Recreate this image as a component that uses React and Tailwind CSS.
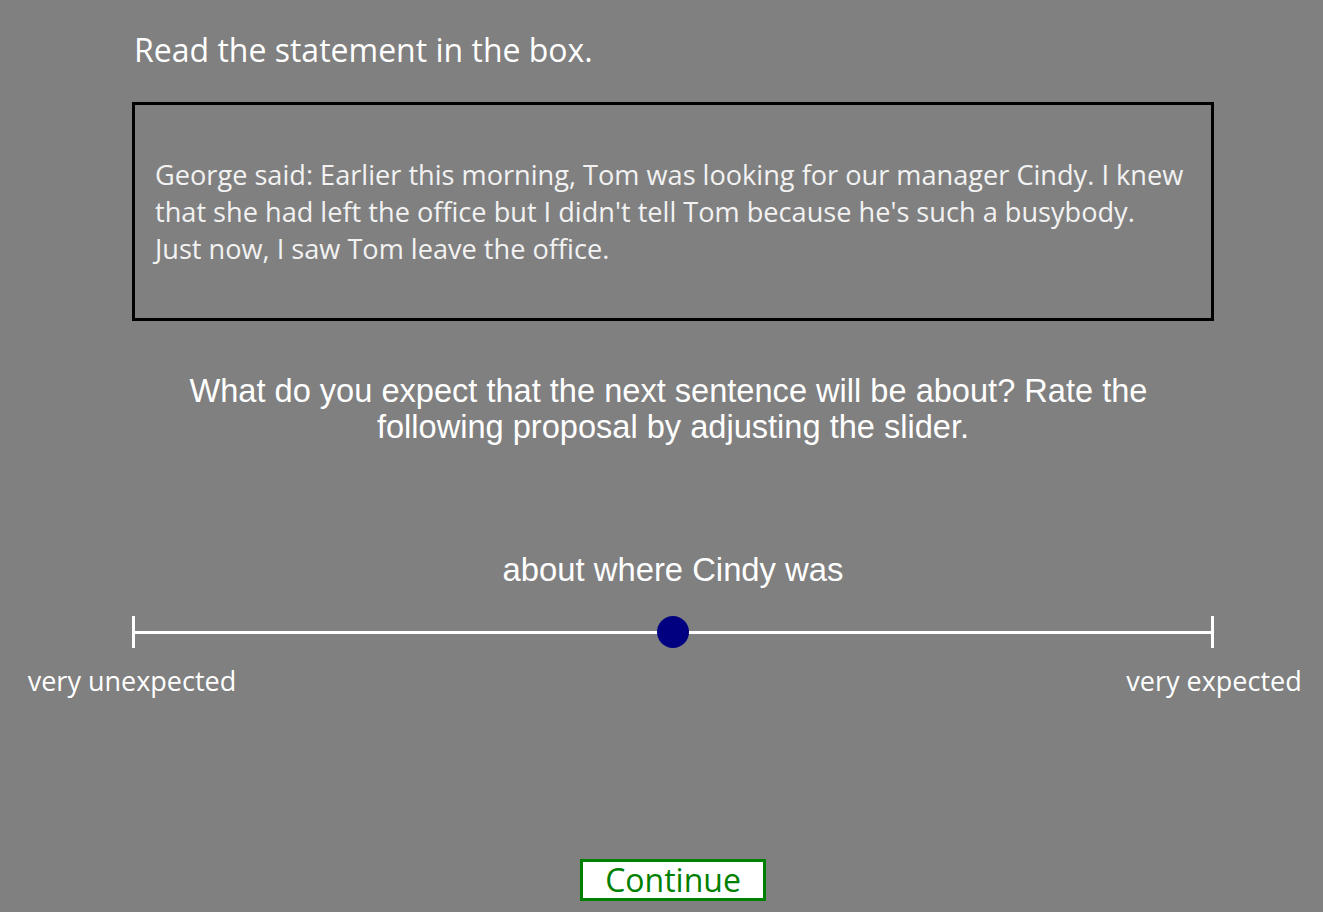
import React, { useState } from "react";

const statementLines = [
  "George said: Earlier this morning, Tom was looking for our manager Cindy. I knew",
  "that she had left the office but I didn't tell Tom because he's such a busybody.",
  "Just now, I saw Tom leave the office.",
];

const App = () => {
  const [value] = useState(50);

  return (
    <div className="min-h-screen w-full bg-[#808080] overflow-hidden">
      <div className="ml-[132px] w-[1082px] pt-[30px]">
        <p className="font-['Open_Sans',sans-serif] text-[32px] leading-[40px] text-white pl-[2px]">
          Read the statement in the box.
        </p>

        <div className="mt-[32px] h-[219px] border-[3px] border-black flex items-center px-[20px]">
          <p className="font-['Open_Sans',sans-serif] text-[27.15px] leading-[37px] text-[#f2f2f2] whitespace-nowrap">
            {statementLines.map((line, i) => (
              <span key={i} className="block">
                {line}
              </span>
            ))}
          </p>
        </div>

        <p className="mt-[52px] text-center font-['Liberation_Sans',Arial,sans-serif] text-[32.6px] leading-[36px] text-white">
          What do you expect that the next sentence will be about? Rate the&nbsp;
          <br />
          following proposal by adjusting the slider.
        </p>

        <p className="mt-[107px] text-center font-['Liberation_Sans',Arial,sans-serif] text-[32.8px] leading-[36px] text-white">
          about where Cindy was
        </p>

        <div className="relative mt-[28px] h-[32px]">
          <div className="absolute left-0 top-[15px] h-[3px] w-full bg-white" />
          <div className="absolute left-0 top-0 h-[32px] w-[3px] bg-white" />
          <div className="absolute right-0 top-0 h-[32px] w-[3px] bg-white" />
          <div
            className="absolute top-0 h-[32px] w-[32px] -translate-x-1/2 rounded-full bg-[#000080]"
            style={{ left: `${value}%` }}
          />
        </div>

        <div className="mt-[16px] flex justify-between font-['Open_Sans',sans-serif] text-[27px] leading-[34px] text-white">
          <span className="w-0 flex justify-center whitespace-nowrap">very unexpected</span>
          <span className="w-0 flex justify-center whitespace-nowrap ml-[-2px]">very expected</span>
        </div>

        <div className="mt-[161px] flex justify-center">
          <button className="w-[186px] h-[42px] border-[3px] border-[#008000] bg-white font-['Open_Sans',sans-serif] text-[32px] leading-[34px] text-[#008000]">
            Continue
          </button>
        </div>
      </div>
    </div>
  );
};

export default App;
